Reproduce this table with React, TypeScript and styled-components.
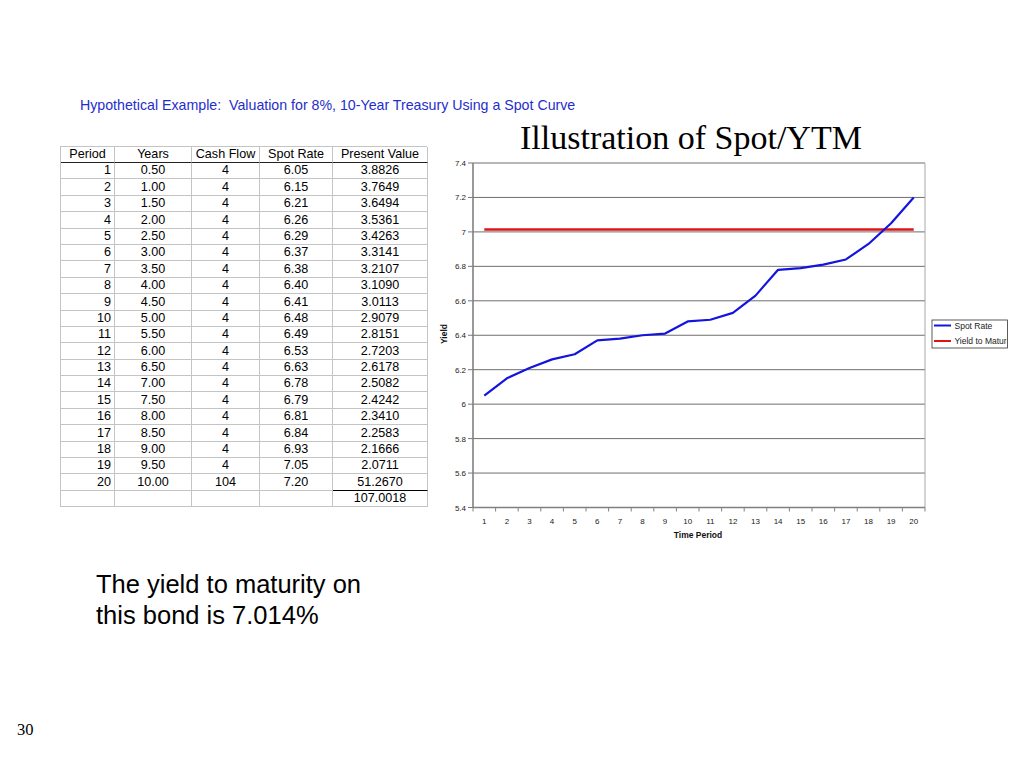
import React from "react";
import styled, { createGlobalStyle } from "styled-components";

const GlobalStyle = createGlobalStyle`
  html, body { margin: 0; padding: 0; background: #ffffff; }
  * { box-sizing: border-box; }
`;

const Slide = styled.div`
  width: 1024px;
  height: 768px;
  overflow: hidden;
  display: flex;
  flex-direction: column;
  font-family: "Liberation Sans", Arial, sans-serif;
  color: #000;
  background: #fff;
`;

const Subtitle = styled.div`
  margin: 97px 0 0 80px;
  font-size: 14.2px;
  line-height: 16px;
  color: #1f2ecc;
  white-space: pre;
`;

const Body = styled.div`
  display: flex;
  margin-top: 5px;
`;

const TableColumn = styled.div`
  margin-left: 60px;
  width: 367px;
  padding-top: 28px;
`;

const ChartColumn = styled.div`
  margin-left: 3px;
  width: 594px;
  display: flex;
  flex-direction: column;
`;

const ChartTitle = styled.div`
  margin: 1px 0 0 90px;
  font-family: "Liberation Serif", "Times New Roman", serif;
  font-size: 34px;
  line-height: 38px;
  white-space: nowrap;
`;

const Grid = styled.div`
  display: grid;
  grid-template-columns: 54px 77px 68px 73px 95px;
  grid-template-rows: 16px repeat(21, 16.4px);
  border-top: 1px solid #c4c4c4;
  border-left: 1px solid #c4c4c4;
  font-size: 12.6px;
`;

const Cell = styled.div<{ $align?: "left" | "center" | "right"; $head?: boolean; $rule?: boolean }>`
  display: flex;
  align-items: center;
  justify-content: ${(p) => (p.$align === "right" ? "flex-end" : p.$align === "left" ? "flex-start" : "center")};
  padding-right: ${(p) => (p.$align === "right" ? "3px" : "0")};
  border-right: 1px solid #c4c4c4;
  border-bottom: ${(p) => (p.$head ? "1.5px solid #222" : p.$rule ? "1px solid #000" : "1px solid #c4c4c4")};
  white-space: nowrap;
  line-height: 1;
`;

const Note = styled.div`
  margin: 22px 0 0 96px;
  font-size: 25.5px;
  line-height: 30.5px;
`;

const PageNum = styled.div`
  margin: 90px 0 0 17px;
  font-family: "Liberation Serif", "Times New Roman", serif;
  font-size: 16.5px;
  line-height: 19px;
`;

const ChartSvg = styled.svg`
  display: block;
  width: 594px;
  height: 390px;
  font-family: "Liberation Sans", Arial, sans-serif;
`;

const TickText = styled.text`
  font-size: 8px;
  fill: #222;
`;

const LegendText = styled.text`
  font-size: 8.5px;
  fill: #222;
`;

const AxisTitle = styled.text`
  font-size: 8.5px;
  font-weight: bold;
  fill: #111;
`;

const rows: [number, string, string, string, string][] = [
  [1, "0.50", "4", "6.05", "3.8826"],
  [2, "1.00", "4", "6.15", "3.7649"],
  [3, "1.50", "4", "6.21", "3.6494"],
  [4, "2.00", "4", "6.26", "3.5361"],
  [5, "2.50", "4", "6.29", "3.4263"],
  [6, "3.00", "4", "6.37", "3.3141"],
  [7, "3.50", "4", "6.38", "3.2107"],
  [8, "4.00", "4", "6.40", "3.1090"],
  [9, "4.50", "4", "6.41", "3.0113"],
  [10, "5.00", "4", "6.48", "2.9079"],
  [11, "5.50", "4", "6.49", "2.8151"],
  [12, "6.00", "4", "6.53", "2.7203"],
  [13, "6.50", "4", "6.63", "2.6178"],
  [14, "7.00", "4", "6.78", "2.5082"],
  [15, "7.50", "4", "6.79", "2.4242"],
  [16, "8.00", "4", "6.81", "2.3410"],
  [17, "8.50", "4", "6.84", "2.2583"],
  [18, "9.00", "4", "6.93", "2.1666"],
  [19, "9.50", "4", "7.05", "2.0711"],
  [20, "10.00", "104", "7.20", "51.2670"],
];

const headers = ["Period", "Years", "Cash Flow", "Spot Rate", "Present Value"];

function SpotTable() {
  return (
    <Grid>
      {headers.map((h) => (
        <Cell key={h} $head>
          {h}
        </Cell>
      ))}
      {rows.map((r) => (
        <React.Fragment key={r[0]}>
          <Cell $align="right">{r[0]}</Cell>
          <Cell>{r[1]}</Cell>
          <Cell>{r[2]}</Cell>
          <Cell>{r[3]}</Cell>
          <Cell $rule={r[0] === 20}>{r[4]}</Cell>
        </React.Fragment>
      ))}
      <Cell />
      <Cell />
      <Cell />
      <Cell />
      <Cell>107.0018</Cell>
    </Grid>
  );
}

const X0 = 473;
const X1 = 925;
const YB = 507.5;
const PER = 172.25;
const CW = (X1 - X0) / 20;
const yOf = (v: number) => YB - (v - 5.4) * PER;
const xOf = (i: number) => X0 + CW / 2 + CW * (i - 1);

function SpotChart() {
  const spots = rows.map((r) => parseFloat(r[3]));
  const yTicks = [7.4, 7.2, 7.0, 6.8, 6.6, 6.4, 6.2, 6.0, 5.8, 5.6, 5.4];
  const pts = spots.map((v, i) => `${xOf(i + 1).toFixed(2)},${yOf(v).toFixed(2)}`).join(" ");
  const ytm = yOf(7.014);
  return (
    <ChartSvg viewBox="430 157 594 390">
      <defs>
        <clipPath id="legclip">
          <rect x={932} y={320} width={74.5} height={28} />
        </clipPath>
      </defs>
      {yTicks.map((t) => (
        <g key={t}>
          <line x1={X0} x2={X1} y1={yOf(t)} y2={yOf(t)} stroke="#5e5e5e" strokeWidth={0.9} />
          <line x1={X0 - 5} x2={X0} y1={yOf(t)} y2={yOf(t)} stroke="#777" strokeWidth={1} />
          <TickText x={466} y={yOf(t) + 3} textAnchor="end">
            {String(Number(t.toFixed(1)))}
          </TickText>
        </g>
      ))}
      <line x1={X1} x2={X1} y1={yOf(7.4)} y2={YB} stroke="#a8a8a8" strokeWidth={1} />
      <line x1={X0} x2={X0} y1={yOf(7.4)} y2={YB} stroke="#808080" strokeWidth={1.6} />
      <line x1={X0} x2={X1} y1={YB} y2={YB} stroke="#808080" strokeWidth={1.6} />
      {Array.from({ length: 21 }, (_, k) => (
        <line key={k} x1={X0 + CW * k} x2={X0 + CW * k} y1={YB} y2={YB + 4} stroke="#808080" strokeWidth={1} />
      ))}
      {Array.from({ length: 20 }, (_, k) => (
        <TickText key={k} x={xOf(k + 1)} y={524} textAnchor="middle">
          {k + 1}
        </TickText>
      ))}
      <line x1={xOf(1)} x2={xOf(20)} y1={ytm} y2={ytm} stroke="#e01414" strokeWidth={2.4} />
      <polyline points={pts} fill="none" stroke="#1414e0" strokeWidth={2.2} strokeLinejoin="round" />
      <AxisTitle x={698} y={538} textAnchor="middle">
        Time Period
      </AxisTitle>
      <AxisTitle x={447} y={334} textAnchor="middle" transform="rotate(-90 447 334)">
        Yield
      </AxisTitle>
      <rect x={932} y={320} width={75.5} height={28} fill="#fff" stroke="#333" strokeWidth={0.8} />
      <g clipPath="url(#legclip)">
        <line x1={934} x2={951} y1={325.5} y2={325.5} stroke="#1414e0" strokeWidth={2.2} />
        <LegendText x={954.5} y={328.8}>Spot Rate</LegendText>
        <line x1={934} x2={951} y1={341} y2={341} stroke="#e01414" strokeWidth={2.2} />
        <LegendText x={954.5} y={344.3}>Yield to Maturity</LegendText>
      </g>
    </ChartSvg>
  );
}

export default function App() {
  return (
    <Slide>
      <GlobalStyle />
      <Subtitle>Hypothetical Example:  Valuation for 8%, 10-Year Treasury Using a Spot Curve</Subtitle>
      <Body>
        <TableColumn>
          <SpotTable />
        </TableColumn>
        <ChartColumn>
          <ChartTitle>Illustration of Spot/YTM</ChartTitle>
          <SpotChart />
        </ChartColumn>
      </Body>
      <Note>
        The yield to maturity on
        <br />
        this bond is 7.014%
      </Note>
      <PageNum>30</PageNum>
    </Slide>
  );
}
